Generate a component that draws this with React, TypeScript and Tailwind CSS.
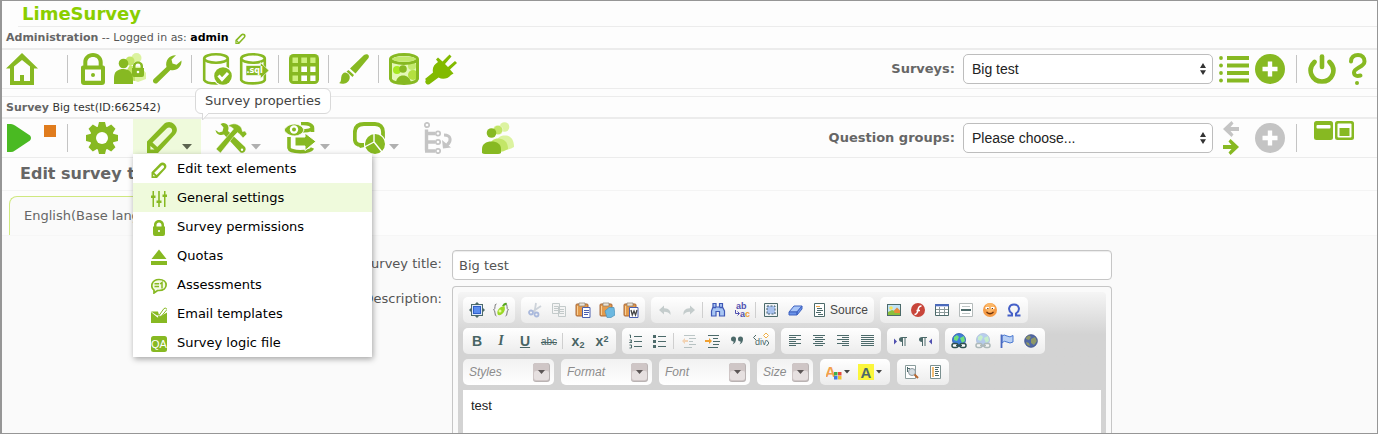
import React from "react";

type Draw = { children: React.ReactNode };

const G = "#87b922";

/* ---------- shared pieces ---------- */

function Big({ children, w = 32 }: Draw & { w?: number }) {
  return (
    <svg width={w} height="32" viewBox={`0 0 ${w} 32`} fill={G} aria-hidden="true">
      {children}
    </svg>
  );
}

function Small({ children }: Draw) {
  return (
    <svg width="16" height="16" viewBox="0 0 16 16" aria-hidden="true">
      {children}
    </svg>
  );
}

function Tool({ label, children }: Draw & { label: string }) {
  return (
    <button type="button" aria-label={label} className="block shrink-0">
      {children}
    </button>
  );
}

function Divider() {
  return <span className="mr-1 ml-[3px] h-7 w-px shrink-0 bg-[#c4c4c4]" />;
}

function Caret({ dark = false }: { dark?: boolean }) {
  return (
    <svg width="10" height="6" viewBox="0 0 10 6" className="mb-1 self-end" aria-hidden="true">
      <path d="M0 0H10L5 5.5Z" fill={dark ? "#5c6450" : "#b0b0b0"} />
    </svg>
  );
}

function Picker({ id, label, value }: { id: string; label: string; value: string }) {
  return (
    <>
      <label htmlFor={id} className="mr-2 text-[13px] font-bold text-[#666]">
        {label}
      </label>
      <div className="flex h-[30px] w-[250px] items-center rounded-[5px] border border-[#bdbdbd] bg-white">
        <select
          id={id}
          className="h-full min-w-0 flex-1 appearance-none bg-transparent pl-2 font-['Liberation_Sans',Arial,sans-serif] text-sm text-[#222] outline-none"
        >
          <option>{value}</option>
        </select>
        <svg width="6" height="12" viewBox="0 0 6 12" className="mr-[6px]" fill="#333" aria-hidden="true">
          <path d="M0 5L3 0L6 5ZM0 7.2H6L3 12Z" />
        </svg>
      </div>
    </>
  );
}

function PlusIcon({ color }: { color: string }) {
  return (
    <svg width="30" height="30" viewBox="0 0 30 30" aria-hidden="true">
      <circle cx="15" cy="15" r="15" fill={color} />
      <path d="M15 7.5V22.5M7.5 15H22.5" stroke="#fff" strokeWidth="4.4" />
    </svg>
  );
}

function PencilShape() {
  return (
    <path
      fillRule="evenodd"
      d="M1 32V20.5L17.5 3.5C20.500 .5 25 .2 28.200 3.200C31.500 6.300 31.800 10.500 29 13.500L12 32ZM6.500 21.500L11.300 26L25.200 11.800C26.600 10.300 26.300 8.500 25.200 7.300C24 6.100 22.200 6 20.700 7.400ZM4.400 25V28.600L8.500 28.400Z"
    />
  );
}

/* ---------- toolbar drawings ---------- */

const HomeIcon = () => (
  <Big>
    <path fillRule="evenodd" d="M16 0L32 15.500H28V32H4V15.500H0ZM8 13.500V28H14V22H18V28H24V13.500L16 7Z" />
  </Big>
);
const LockIcon = () => (
  <Big>
    <path
      fillRule="evenodd"
      d="M6.300 12.500V9C6.300 4 10.500 0 16 0S25.700 4 25.700 9V12.500H26C27.200 12.500 28 13.300 28 14.500V29C28 30.800 26.800 32 25 32H7C5.200 32 4 30.800 4 29V14.500C4 13.300 4.800 12.500 6 12.500ZM10.300 12.500H21.700V9.500C21.700 6.200 19.500 4 16 4S10.300 6.200 10.300 9.500ZM8 16.500V27.700H24V16.500Z"
    />
    <circle cx="16" cy="22" r="2" />
  </Big>
);
const UsersLockIcon = () => (
  <Big>
    <circle cx="22.500" cy="5" r="5" fill="#dcf3a0" />
    <path d="M13 25C14 16 20 12 27 14L32 20V26L24 29Z" fill="#dcf3a0" />
    <circle cx="16" cy="8" r="4.500" fill="#c3e668" />
    <path d="M8 25L16 12L21 14V28Z" fill="#c3e668" />
    <circle cx="9.500" cy="10.500" r="4.800" />
    <path d="M0 31V25C0 18.500 4 16 9.500 16S19 19.500 19 27V31Z" />
    <path fillRule="evenodd" d="M18 15H19V13C19 7 29 7 29 13V15H30V22Q30 24 28 24H20Q18 24 18 22ZM21.500 15H26.500V13C26.500 9.700 21.500 9.700 21.500 13Z" />
    <circle cx="24" cy="19" r="1.300" fill="#fff" />
  </Big>
);
const WrenchIcon = () => (
  <Big>
    <path d="M2.800 26L15.500 14C13.800 7.500 18.500 1.800 25 2.200L20.500 6.500L21.500 10.500L25.500 11.800L30.500 7.500C31 14 25 18.500 19.500 17L6 30.200C3.500 31.500 .5 28.500 2.800 26Z" />
  </Big>
);
const Drum = () => (
  <g fill="none" stroke={G} strokeWidth="2.600">
    <ellipse cx="15" cy="5.500" rx="11.800" ry="4.200" />
    <path d="M3.200 5.500V27C5 31.500 25 31.500 26.800 27V5.500" />
  </g>
);
const DbCheckIcon = () => (
  <Big>
    <Drum />
    <circle cx="22" cy="23" r="10" fill="#fff" />
    <circle cx="22" cy="23" r="8.800" />
    <path d="M17.500 22.500L21 26.500L27 20" fill="none" stroke="#fff" strokeWidth="3" />
  </Big>
);
const DbSqlIcon = () => (
  <Big>
    <Drum />
    <path d="M8 12.500H22.500V9.500L31 17.500L22.500 25.500V22.500H8Z" stroke="#fff" strokeWidth=".6" />
    <text x="8.500" y="19.800" fontSize="8" fontWeight="bold" fontFamily="DejaVu Sans, sans-serif" fill="#fff">
      .sql
    </text>
  </Big>
);
const GridIcon = () => (
  <Big>
    <rect x="1" y="1" width="30" height="30" rx="4.500" />
    <path d="M4.500 4.500H10V10H4.500ZM13.300 4.500H19V10H13.300ZM22.300 4.500H27.500V10H22.300ZM4.500 13.500H10V19H4.500ZM4.500 22.500H10V28H4.500Z" fill="#cdf07c" />
    <path d="M13.300 13.500H19V19H13.300ZM22.300 13.500H27.500V19H22.300ZM13.300 22.500H19V28H13.300ZM22.300 22.500H27.500V28H22.300Z" fill="#fff" />
  </Big>
);
const BrushIcon = () => (
  <Big>
    <path d="M26 2C29 0 32 2 30.500 5L17.500 20.500L12 15.500ZM10.500 17L16 22L14.500 24L8.500 18.500ZM7.500 19.500C11 20.500 12.500 23 11.500 26C10 31 4 31.500 1 30C3 29 3 27.500 3.200 24.500C3.500 21.500 5 19.500 7.500 19.500Z" />
  </Big>
);
const JarIcon = () => (
  <Big>
    <path d="M2 5H30V27C26 32 6 32 2 27Z" fill="#e4f8b8" />
    <circle cx="9" cy="17" r="4" fill="#a6e822" />
    <circle cx="24" cy="13" r="4" fill="#c3ea6e" />
    <circle cx="15" cy="16" r="3.800" />
    <circle cx="25" cy="22" r="5" fill="#b4e040" />
    <path d="M8 30C8 20 22 20 23 30Z" />
    <g fill="none" stroke={G} strokeWidth="3">
      <ellipse cx="16" cy="6" rx="13.500" ry="4.500" />
      <path d="M2.500 6V26C4 32 28 32 29.500 26V6" />
    </g>
    <ellipse cx="16" cy="6" rx="11.500" ry="2.800" fill="#c3ea6e" />
  </Big>
);
const PlugIcon = () => (
  <Big>
    <path fill="#82ba00" d="M0 26L8 19.500C7 15 9 11.500 13 9L11 6.500L13 4.500L17.500 8.500L24.500 1.500L26.500 3.500L20 11L23 14L30 8L32 10L25 16.500L28.500 20.500L26 22C22.500 26 17.500 27 13.500 24.500L4 31.500C1.500 32 -1 29 1 27Z" />
  </Big>
);
const ListIcon = () => (
  <svg width="30" height="28" viewBox="0 0 30 28" fill={G} aria-hidden="true">
    <path d="M8 1H30V5H8ZM8 8.500H30V12.500H8ZM8 16H30V20H8ZM8 23.500H30V27.500H8Z" />
    <circle cx="2" cy="3" r="1.900" />
    <circle cx="2" cy="10.500" r="1.900" />
    <circle cx="2" cy="18" r="1.900" />
    <circle cx="2" cy="25.500" r="1.900" />
  </svg>
);
const PowerIcon = () => (
  <svg width="28" height="30" viewBox="0 0 28 30" fill="none" stroke={G} strokeLinecap="round" aria-hidden="true">
    <path d="M14 2.500V13" strokeWidth="4.600" />
    <path d="M6.500 8C-1.500 16 4 27.500 14 27.500S29.500 16 21.500 8" strokeWidth="4.600" />
  </svg>
);
const HelpIcon = () => (
  <svg width="18" height="32" viewBox="0 0 18 32" fill="none" stroke={G} aria-hidden="true">
    <path d="M2 8.500C2 4 5 2 9 2S15.500 4.500 15.500 8.500C15.500 14 5 15 5 19.500C5 22.500 7.500 23.500 11.500 22.500" strokeWidth="4" strokeLinecap="round" />
    <circle cx="8" cy="30" r="2" fill={G} stroke="none" />
  </svg>
);
const PlayIcon = () => (
  <svg width="25" height="28" viewBox="0 0 25 28" aria-hidden="true">
    <path d="M0 0H4Q6 0 8 1.500L23 11.500Q25 14 23 16.500L8 26.500Q6 28 4 28H0Z" fill="#4aba22" />
  </svg>
);
const GearIcon = () => (
  <Big>
    <g>
      {[0, 45, 90, 135].map((a) => (
        <path key={a} d="M13 0H19L20.500 6V26L19 32H13L11.500 26V6Z" transform={`rotate(${a} 16 16)`} />
      ))}
      <circle cx="16" cy="16" r="12" />
      <circle cx="16" cy="16" r="6" fill="#fff" />
    </g>
  </Big>
);
const ToolsIcon = () => (
  <Big>
    <path d="M8 1C13 1 14.500 5 13 9L30 25C32 28 29 32 25.500 30.500L9 12.500C5 14 1 12 .5 8L4 10.500L7.500 9.500L8.500 5.500L5.500 2Z" />
    <circle cx="27" cy="27.800" r="1.200" fill="#fff" />
    <path d="M13 4C18 0 24 2 26.500 6L27.500 9.500L30 9L32 12L28 16L25 12.500L22.500 10.500L19.500 13.500L5.500 31L1 27L16 10L18.500 7C17 5 15 4.500 13 4Z" stroke="#fff" strokeWidth=".5" />
  </Big>
);
const ExportIcon = () => (
  <Big>
    <path d="M17 1.500C24 1 28.500 3 28.500 6V10M5 15V26C6 31 26 31 28.500 26M18 8.500C23 9 27 8 28 6" fill="none" stroke={G} strokeWidth="3.600" />
    <path d="M0 8C4 0 17 0 20 8C17 16 4 16 0 8Z" stroke="#fff" />
    <circle cx="10" cy="7.500" r="4.200" fill="#fff" />
    <circle cx="10" cy="7.500" r="2" />
    <path d="M11 15H21V11L32 19.500L21 28.500V24H11Z" stroke="#fff" />
  </Big>
);
const ResponsesIcon = () => (
  <Big>
    <path d="M8 23C4 23 1.800 21 1.800 17V11C1.800 5 5 2 11 2H22C27 2 30 5 30 10V17" fill="none" stroke={G} strokeWidth="3.800" />
    <path d="M4 21H11L11.500 25L7 26Z" />
    <circle cx="22" cy="22" r="11" fill="#fff" />
    <circle cx="22" cy="22" r="10" />
    <path d="M21 20V11M21 20L11.500 25M21 20L29 30" stroke="#fff" strokeWidth="1.400" />
  </Big>
);
const OrganizeIcon = () => (
  <Big>
    <g fill="none" stroke="#c4c4c4">
      <circle cx="5" cy="3" r="2.200" strokeWidth="1.700" />
      <path d="M4.500 7.500V28.500M4 11.500H13M4 20H13M3 29H13" strokeWidth="3.400" />
      <g strokeWidth="1.700">
        <circle cx="16" cy="11.500" r="2.200" />
        <circle cx="16" cy="20" r="2.200" />
        <circle cx="16" cy="29" r="2.200" />
      </g>
      <path d="M22 13C29 13 30 19 25 23" strokeWidth="3" />
    </g>
    <path d="M20 18L21 26.500L29 25.500Z" fill="#c4c4c4" />
  </Big>
);
const UsersIcon = () => (
  <Big>
    <circle cx="22.500" cy="5" r="4.800" fill="#dcf3a0" />
    <path d="M14 21C15 15 19 13.500 23 13.500C29 13.500 32 18 32 25C29 27 25 28 22 28Z" fill="#dcf3a0" />
    <circle cx="16" cy="8" r="4.800" fill="#c3e668" stroke="#fff" strokeWidth=".5" />
    <path d="M7 25C8 19 12 16.500 16 16.500C22 16.500 26 20 26 27C23 29 20 30 17 30Z" fill="#c3e668" />
    <circle cx="9.500" cy="11" r="4.800" />
    <path d="M0 31V27C0 22 4 19.500 9.500 19.500S19 22 19 27V31Q18 32 16 32H3Q1 32 0 31Z" />
  </Big>
);

/* ---------- survey properties menu ---------- */

const menu: { label: string; icon: React.ReactNode }[] = [
  {
    label: "Edit text elements",
    icon: (
      <g transform="scale(.5)">
        <PencilShape />
      </g>
    ),
  },
  {
    label: "General settings",
    icon: <path d="M1.500 0H3V4.500H4.500V7H3V16H1.500V7H0V4.500H1.500ZM7.200 0H8.800V9.500H10.500V12H8.800V16H7.200V12H5.500V9.500H7.200ZM13 0H14.500V3.500H16V6H14.500V16H13V6H11.500V3.500H13Z" />,
  },
  {
    label: "Survey permissions",
    icon: (
      <path
        fillRule="evenodd"
        d="M3 6.500V5C3 -1.600 13 -1.600 13 5V6.500H14V14Q14 16 12 16H4Q2 16 2 14V6.500ZM5.500 6.500H10.500V5C10.500 1.600 5.500 1.600 5.500 5ZM7.200 10V12H8.800V10Z"
      />
    ),
  },
  { label: "Quotas", icon: <path d="M8 .5L15.500 10H.5ZM0 12H16V16H0Z" /> },
  {
    label: "Assessments",
    icon: (
      <>
        <path d="M3 12.200C-1 9 .5 1.500 8 1.500C17.500 1.500 17.500 12.500 8 12.500H6.500L3 15Z" fill="#f3fae4" stroke={G} strokeWidth="1.700" />
        <path d="M3.500 5.700H8M3.500 8.400H8M9 6L11 4.500V10.500" fill="none" stroke={G} strokeWidth="1.500" />
      </>
    ),
  },
  {
    label: "Email templates",
    icon: (
      <>
        <path d="M0 5L6.500 10.500L9 9.500L16 5.500V16H0Z" />
        <path d="M0 4.500H7L8 8L6 8.500Z" />
        <path d="M8 8.500L13 1.500Q15 0 16 2.500L10.500 9L7.500 10Z" fill="#fff" stroke={G} />
      </>
    ),
  },
  {
    label: "Survey logic file",
    icon: (
      <>
        <rect width="16" height="16" rx="2.500" />
        <text x="8" y="12" fontSize="11" textAnchor="middle" fontFamily="Liberation Sans, Arial, sans-serif" fill="#fff">
          QA
        </text>
      </>
    ),
  },
];

function PropertiesMenu() {
  return (
    <ul className="absolute top-full left-0 z-20 w-[239px] bg-white shadow-[1px_2px_6px_rgba(0,0,0,0.35)]">
      {menu.map((m) => (
        <li key={m.label}>
          <a
            href="#"
            className={`flex h-[29px] items-center text-[13px] text-black ${m.label === "General settings" ? "bg-[#effadc]" : ""}`}
          >
            <svg width="16" height="16" viewBox="0 0 16 16" fill={G} className="mt-0.5 mr-2.5 ml-[18px]" aria-hidden="true">
              {m.icon}
            </svg>
            {m.label}
          </a>
        </li>
      ))}
    </ul>
  );
}

/* ---------- editor ---------- */

const T = "#4c6a6a";

const lines = (d: string) => <path d={d} stroke={T} strokeWidth="1" fill="none" />;

const Clip = ({ children }: Draw) => (
  <>
    <rect x="1" y="2" width="12" height="12" rx="1" fill="#e39a4b" stroke="#a8683a" />
    <path d="M4 1H10V4H4Z" fill="#ece4d6" stroke="#8b7d6b" strokeWidth=".7" />
    <path d="M2.500 4V13" stroke="#f8cf95" />
    {children}
  </>
);

const Globe = ({ faded = false }: { faded?: boolean }) => (
  <g opacity={faded ? 0.35 : 1}>
    <circle cx="8" cy="7" r="6.500" fill="#3f7fd8" stroke="#2855a8" strokeWidth=".8" />
    <path d="M3 4L6 2L8 4L6 8L3 7ZM9 5L13 3L14 8L11 10Z" fill="#6fe07c" />
    <rect x="1" y="10.500" width="6" height="4" rx="2" fill="#fff" stroke="#2f5050" strokeWidth="1.500" />
    <rect x="9" y="10.500" width="6" height="4" rx="2" fill="#fff" stroke="#2f5050" strokeWidth="1.500" />
    <path d="M5 12.500H11" stroke="#2f5050" strokeWidth="1.500" />
  </g>
);

function Ed({ label, children }: Draw & { label: string }) {
  return (
    <button type="button" aria-label={label} className="flex h-6 w-6 items-center justify-center">
      {children}
    </button>
  );
}

function EdIcon({ label, children }: Draw & { label: string }) {
  return (
    <Ed label={label}>
      <Small>{children}</Small>
    </Ed>
  );
}

function Group({ children }: Draw) {
  return (
    <div className="flex h-[26px] items-center rounded-[5px] bg-linear-to-b from-white to-[#ececec] px-0.5">{children}</div>
  );
}

function Bar() {
  return <span className="mr-[3px] ml-px h-4 w-px bg-[#cfcfcf]" />;
}

function Combo({ name, width }: { name: string; width: string }) {
  return (
    <div className={`flex h-[26px] items-center rounded-[5px] bg-linear-to-b from-[#f2f2f2] to-white pr-1 ${width}`}>
      <select
        aria-label={name}
        className="min-w-0 flex-1 appearance-none bg-transparent pl-1.5 text-xs text-[#8c8c8c] italic outline-none"
      >
        <option>{name}</option>
      </select>
      <svg width="17" height="19" viewBox="0 0 17 19" aria-hidden="true">
        <rect width="17" height="19" rx="3" fill="#b9b3b3" />
        <rect x="0" y="0" width="16" height="18" rx="3" fill="#cfc6c6" />
        <rect x="1" y="8" width="15" height="9" rx="2" fill="#e6e0e0" />
        <path d="M5 7H12L8.500 11Z" fill="#5c5656" />
      </svg>
    </div>
  );
}

function DropArrow() {
  return (
    <svg width="6" height="4" viewBox="0 0 6 4" className="mr-1.5" aria-hidden="true">
      <path d="M0 0H6L3 3.500Z" fill="#444" />
    </svg>
  );
}

function Toolbar() {
  return (
    <div className="flex flex-col gap-[5px] font-['Liberation_Sans',Arial,sans-serif]">
      <div className="flex flex-wrap gap-1.5">
        <Group>
          <EdIcon label="Maximize">
            <rect x="2.500" y="2.500" width="11" height="11" fill="#dfe9fa" stroke={T} />
            <rect x="4.500" y="4.500" width="7" height="7" fill="#5b8def" stroke="#2f5fc8" />
            <path d="M8 0L10 2H6ZM8 16L10 14H6ZM0 8L2 6V10ZM16 8L14 6V10Z" fill={T} />
          </EdIcon>
          <EdIcon label="Placeholder fields">
            <path d="M3.500 2Q1.800 2 2 4.500T.5 8Q2 8 2 11T3.500 14M12.500 2Q14.200 2 14 4.500T15.500 8Q14 8 14 11T12.500 14" fill="none" stroke="#777" />
            <path d="M11 3C14 9 9 14 5 13C3 9 6 5 11 4Z" fill="#9bd827" />
            <circle cx="7" cy="9" r="1.500" fill="#e6fb9a" />
            <path d="M9 4Q11 0 14 1Q13 4 10 4Z" fill="#53a51b" />
          </EdIcon>
        </Group>
        <Group>
          <EdIcon label="Cut">
            <g fill="none" stroke="#aab9dc" strokeWidth="1.800">
              <path d="M9 1L7.500 10M14 4L5 10" stroke="#cdd3da" />
              <circle cx="4" cy="10.500" r="2" />
              <circle cx="9.500" cy="12.500" r="2" />
            </g>
          </EdIcon>
          <EdIcon label="Copy">
            <path d="M1.500 1.500H8.500V11.500H1.500ZM7.500 4.500H14.500V14.500H7.500Z" fill="#f4f4f4" stroke="#c3caca" />
            <path d="M3 4.500H7M3 6.500H7M3 8.500H7M9 7.500H13M9 9.500H13M9 11.500H13" stroke="#c3caca" />
          </EdIcon>
          <EdIcon label="Paste">
            <Clip>
              <path d="M7.500 5.500H15V15.500H7.500Z" fill="#fff" stroke="#4a5fae" />
              <path d="M9 8.500H14M9 10.500H14M9 12.500H13" stroke="#4a5fae" />
            </Clip>
          </EdIcon>
          <EdIcon label="Paste as plain text">
            <Clip>
              <path d="M6 9L10 5.500H15L16 13L12 15.500H8Z" fill="#6cb8e0" stroke="#4a90b8" strokeWidth=".7" />
            </Clip>
          </EdIcon>
          <EdIcon label="Paste from Word">
            <Clip>
              <path d="M6.500 5.500H15V15.500H6.500Z" fill="#fff" stroke="#4a5fae" />
              <path d="M8 8L9.300 13L11 9L12.500 13L14 8" fill="none" stroke="#444" strokeWidth="1.300" />
            </Clip>
          </EdIcon>
        </Group>
        <Group>
          <EdIcon label="Undo">
            <path d="M2 8L7 3.500V6.200C12 6 14 9 13.500 13C12 10.500 10.500 9.800 7 9.800V12.500Z" fill="#c4cccc" />
          </EdIcon>
          <EdIcon label="Redo">
            <path d="M14 8L9 3.500V6.200C4 6 2 9 2.500 13C4 10.500 5.500 9.800 9 9.800V12.500Z" fill="#c4cccc" />
          </EdIcon>
          <Bar />
          <EdIcon label="Find">
            <path d="M3 1.500H6V5H9.500V1.500H12.500V5L14.500 9V14H9.500V9.500H6V14H1.500V9L3 5Z" fill="#a8c6f4" stroke="#3f58b5" strokeWidth="1.200" />
            <path d="M3 5.500H6M9.500 5.500H12.500" stroke="#3f58b5" strokeWidth="1.500" />
          </EdIcon>
          <EdIcon label="Replace">
            <g fontSize="9" fontFamily="Liberation Sans, Arial, sans-serif" fontWeight="bold">
              <text x="2" y="7" fill="#5050b0">ab</text>
              <text x="6" y="15" fill="#5050b0">a</text>
              <text x="11" y="15" fill="#f0a030">c</text>
            </g>
            <path d="M1.500 8V11.500H5M3.500 9.500L5.500 11.500L3.500 13.500" fill="none" stroke="#5050b0" />
          </EdIcon>
          <Bar />
          <EdIcon label="Select all">
            <path d="M1.500 1.500H14.500V14.500H1.500Z" fill="#eef2f6" stroke={T} />
            <rect x="4" y="4" width="8" height="8" fill="#a9c2ef" stroke="#47606a" strokeDasharray="2 1.500" />
          </EdIcon>
          <EdIcon label="Remove format">
            <path d="M2 10L7 4H15L10 10Z" fill="#a9c6f8" stroke="#3f62c0" />
            <path d="M2 10H10V13H2ZM10 10L15 4V7L10 13Z" fill="#6b94ea" stroke="#3f62c0" />
          </EdIcon>
          <button type="button" className="flex h-6 items-center gap-[3px] px-1 text-xs text-[#484848]">
            <Small>
              <path d="M3.500 1.500H13.500V14.500H3.500Z" fill="#fff" stroke={T} />
              <path d="M5 4.500H9" stroke="#f0a848" />
              {lines("M6 6.500H11M6 8.500H12M5 10.500H10M7 12.500H12")}
            </Small>
            Source
          </button>
        </Group>
        <Group>
          <EdIcon label="Image">
            <rect x="1.500" y="2.500" width="13" height="11" fill="#bfe2f5" stroke={T} />
            <path d="M2 13V10L6 8L14 11V13Z" fill="#8abf3c" />
            <circle cx="5" cy="6" r="1.800" fill="#f5e458" />
            <path d="M8 8.500L11 5.500L14 8.500V11H8.500Z" fill="#e88a38" />
          </EdIcon>
          <EdIcon label="Flash">
            <circle cx="8" cy="8" r="7" fill="#c8453a" />
            <path d="M11.500 4Q8.500 4 8 8T4.500 12.500M6.500 8.500H10" fill="none" stroke="#fff" strokeWidth="1.600" />
          </EdIcon>
          <EdIcon label="Table">
            <path d="M1.500 2.500H14.500V13.500H1.500Z" fill="#fff" stroke={T} />
            <path d="M1 3.200H15" stroke="#4a6ac0" strokeWidth="2.200" />
            <path d="M2 7.500H14M2 10.500H14M5.500 5V13M10.500 5V13" stroke="#8b9a9a" />
          </EdIcon>
          <EdIcon label="Horizontal line">
            <path d="M1.500 1.500H14.500V14.500H1.500Z" fill="#fff" stroke="#b4baba" />
            <path d="M4 4.500H12M4 11.500H12" stroke="#c0c6c6" />
            <path d="M3 8H13" stroke={T} strokeWidth="2" />
          </EdIcon>
          <EdIcon label="Smiley">
            <circle cx="8" cy="8" r="7" fill="#f59b45" />
            <circle cx="8" cy="5.500" r="4.500" fill="#fbb768" />
            <path d="M3.500 6H7M9 6H12.500" stroke="#fff" strokeWidth="2" />
            <path d="M5.200 6.500H6.500M9.700 6.500H11M4.500 10Q8 13.500 11.500 10" fill="none" stroke="#6b3410" strokeWidth="1.200" />
          </EdIcon>
          <EdIcon label="Special character">
            <path d="M1.500 13.500H6V11.500C1 8 3 2.500 8 2.500S15 8 10 11.500V13.500H14.500" fill="none" stroke="#4560c8" strokeWidth="2" />
          </EdIcon>
        </Group>
      </div>

      <div className="flex flex-wrap gap-1.5">
        <Group>
          <Ed label="Bold">
            <span className="text-sm font-bold text-[#486464]">B</span>
          </Ed>
          <Ed label="Italic">
            <span className="font-['Liberation_Serif',serif] text-sm font-bold text-[#486464] italic">I</span>
          </Ed>
          <Ed label="Underline">
            <span className="text-sm font-bold text-[#486464] underline">U</span>
          </Ed>
          <Ed label="Strikethrough">
            <span className="text-[10px] text-[#486464] line-through">abc</span>
          </Ed>
          <Bar />
          <Ed label="Subscript">
            <span className="text-sm leading-4 font-bold text-[#486464]">
              x<sub className="text-[9px]">2</sub>
            </span>
          </Ed>
          <Ed label="Superscript">
            <span className="text-sm leading-4 font-bold text-[#486464]">
              x<sup className="text-[9px]">2</sup>
            </span>
          </Ed>
        </Group>
        <Group>
          <EdIcon label="Numbered list">
            {lines("M6 3.500H14M6 8.500H14M6 13.500H14M1.500 2H2.500V5M1.500 7H3.500V8.500L1.500 9.500H4M1.500 12H3.500V15H1.500")}
          </EdIcon>
          <EdIcon label="Bulleted list">
            {lines("M6 3.500H14M6 8.500H14M6 13.500H14")}
            <path d="M1 2H4V5H1ZM1 7H4V10H1ZM1 12H4V15H1Z" fill={T} />
          </EdIcon>
          <Bar />
          <EdIcon label="Decrease indent">
            <g opacity=".35">
              {lines("M3 2.500H14M8 5.500H15M8 8.500H12M8 11.500H15M3 14.500H11")}
              <path d="M1 8L4 5V7H7V9H4V11Z" fill="#f0953c" />
            </g>
          </EdIcon>
          <EdIcon label="Increase indent">
            {lines("M3 2.500H14M8 5.500H13M8 8.500H15M8 11.500H14M3 14.500H13")}
            <path d="M7 8L4 5V7H0V9H4V11Z" fill="#f0a030" />
          </EdIcon>
          <EdIcon label="Block quote">
            <path d="M2 6A2.500 2.500 0 1 1 7 6Q7 10 3.500 11.500Q5 9.500 4.500 8.500Q2 8.500 2 6ZM9 6A2.500 2.500 0 1 1 14 6Q14 10 10.500 11.500Q12 9.500 11.500 8.500Q9 8.500 9 6Z" fill={T} />
          </EdIcon>
          <EdIcon label="Create div container">
            <text x="2" y="12" fontSize="9" fontFamily="Liberation Sans, Arial, sans-serif" fill={T}>
              div
            </text>
            <path d="M3 2L.5 4.500L3 7M13.500 7L16 10L13.500 13" fill="none" stroke={T} />
            <path d="M13 0L15.500 2.500L13 5L10.500 2.500Z" fill="#fff" stroke="#f0b048" />
          </EdIcon>
        </Group>
        <Group>
          <EdIcon label="Align left">{lines("M2 2.500H14M2 4.500H9M2 6.500H14M2 8.500H9M2 10.500H14M2 12.500H9")}</EdIcon>
          <EdIcon label="Center">{lines("M2 2.500H14M4 4.500H12M2 6.500H14M4 8.500H12M2 10.500H14M4 12.500H12")}</EdIcon>
          <EdIcon label="Align right">{lines("M2 2.500H14M7 4.500H14M2 6.500H14M7 8.500H14M2 10.500H14M7 12.500H14")}</EdIcon>
          <EdIcon label="Justify">{lines("M2 2.500H15M2 4.500H15M2 6.500H15M2 8.500H15M2 10.500H15M2 12.500H15")}</EdIcon>
        </Group>
        <Group>
          <EdIcon label="Text direction left to right">
            <path d="M1 5.500L4 8.500L1 11.500Z" fill="#5050b0" />
            <path d="M14 4H9C5 4 5 9 9 9V13H10V5H11.500V13H12.500V5H14Z" fill={T} />
          </EdIcon>
          <EdIcon label="Text direction right to left">
            <path d="M15 5.500L12 8.500L15 11.500Z" fill="#5050b0" />
            <path d="M10 4H5C1 4 1 9 5 9V13H6V5H7.500V13H8.500V5H10Z" fill={T} />
          </EdIcon>
        </Group>
        <Group>
          <EdIcon label="Link">
            <Globe />
          </EdIcon>
          <EdIcon label="Unlink">
            <Globe faded />
          </EdIcon>
          <EdIcon label="Anchor">
            <path d="M3 3Q5 1 8 3T14 2.500V9Q11 11 8 9T3 10Z" fill="#b9d0f4" stroke="#4a78d0" />
            <path d="M2.500 1.500V15" stroke="#4a68c0" strokeWidth="1.800" />
          </EdIcon>
          <EdIcon label="Page frame">
            <circle cx="8" cy="8" r="6.500" fill="#5068a4" />
            <path d="M3 4L6 2L8 4L6 7L3 6ZM8 6L12 4L14 8L11 12L8 10ZM3 9L6 10L7 13L4 12Z" fill="#8e9866" />
            <circle cx="8" cy="8" r="6.300" fill="none" stroke="#44548a" strokeWidth=".7" />
          </EdIcon>
        </Group>
      </div>

      <div className="flex flex-wrap gap-[7px]">
        <Combo name="Styles" width="w-[91px]" />
        <Combo name="Format" width="w-[91px]" />
        <Combo name="Font" width="w-[91px]" />
        <Combo name="Size" width="w-14" />
        <Group>
          <button type="button" aria-label="Text colour" className="flex h-6 items-center gap-0.5 pl-1">
            <Small>
              <text x="-1" y="13" fontSize="15" fontWeight="bold" fontFamily="Liberation Sans, Arial, sans-serif" fill="#f2a04c">
                A
              </text>
              <path d="M8 8H11.500V11.500H8Z" fill="#3fae49" />
              <path d="M12 8H15.500V11.500H12Z" fill="#e64a3c" />
              <path d="M8 12H11.500V15.500H8Z" fill="#3f78e0" />
              <path d="M12 12H15.500V15.500H12Z" fill="#f0c030" />
            </Small>
            <DropArrow />
          </button>
          <button type="button" aria-label="Background colour" className="flex h-6 items-center gap-0.5 pl-0.5">
            <Small>
              <rect width="16" height="16" fill="#fbf63c" />
              <text x="8" y="13.500" textAnchor="middle" fontSize="15" fontWeight="bold" fontFamily="Liberation Sans, Arial, sans-serif" fill={T}>
                A
              </text>
            </Small>
            <DropArrow />
          </button>
        </Group>
        <Group>
          <EdIcon label="Preview">
            <path d="M2.500 1.500H12.500V14.500H2.500Z" fill="#fff" stroke="#8a9c9c" />
            <path d="M4 4.500H7M4.500 3V8" stroke={T} />
            <circle cx="9" cy="8" r="3.500" fill="#d5dde2" stroke="#8f9a9f" />
            <path d="M11.500 10.500L15 14" stroke="#b8662f" strokeWidth="2" />
          </EdIcon>
          <EdIcon label="Templates">
            <path d="M3.500 1.500H13.500V14.500H3.500Z" fill="#fff" stroke="#7b9090" />
            <path d="M6 3V13" stroke="#f0a848" strokeWidth="1.500" />
            {lines("M8 3.500H12M8 5.500H11M8 7.500H12M8 9.500H11M8 11.500H12")}
          </EdIcon>
        </Group>
      </div>
    </div>
  );
}

/* ---------- page ---------- */

export default function App() {
  return (
    <div className="flex h-screen flex-col overflow-hidden border border-l-2 border-[#969696] bg-[#fdfdfd] font-['DejaVu_Sans',Verdana,sans-serif] text-[13px] text-[#555]">
      <header className="shrink-0">
        <h1 className="ml-4 flex h-[26px] items-center border-b border-[#ececec] pl-1 text-lg font-bold text-[#8ace00]">LimeSurvey</h1>
        <p className="flex h-[23px] items-center border-b-2 border-[#ececec] pt-0.5 pl-1 text-[11px] whitespace-pre">
          <strong className="text-[#666]">Administration</strong>
          {" -- Logged in as: "}
          <strong className="text-black">admin</strong>
          <a href="#" aria-label="Edit account" className="ml-1.5">
            <svg width="11" height="11" viewBox="0 0 32 32" fill={G} aria-hidden="true">
              <PencilShape />
            </svg>
          </a>
        </p>
        <nav className="flex h-[39px] items-center justify-between border-b border-[#ececec] pr-px pl-1">
          <div className="flex items-center gap-[5px]">
            <Tool label="Home"><HomeIcon /></Tool>
            <span className="w-4" />
            <Divider />
            <Tool label="Manage administrators"><LockIcon /></Tool>
            <Tool label="Manage user groups"><UsersLockIcon /></Tool>
            <Tool label="Global settings"><WrenchIcon /></Tool>
            <Divider />
            <Tool label="Check data integrity"><DbCheckIcon /></Tool>
            <Tool label="Backup database"><DbSqlIcon /></Tool>
            <Divider />
            <Tool label="Label sets"><GridIcon /></Tool>
            <Divider />
            <Tool label="Template editor"><BrushIcon /></Tool>
            <Divider />
            <Tool label="Participants database"><JarIcon /></Tool>
            <Tool label="Plugin manager"><PlugIcon /></Tool>
          </div>
          <div className="flex items-center">
            <Picker id="surveys" label="Surveys:" value="Big test" />
            <div className="ml-1.5 flex w-[157px] items-center">
              <Tool label="List surveys"><ListIcon /></Tool>
              <span className="w-1.5" />
              <Tool label="Create survey"><PlusIcon color={G} /></Tool>
              <span className="mx-[11px] h-7 w-px bg-[#c4c4c4]" />
              <Tool label="Log out"><PowerIcon /></Tool>
              <span className="w-[13px]" />
              <Tool label="Help"><HelpIcon /></Tool>
            </div>
          </div>
        </nav>
      </header>

      <section className="mt-[7px] shrink-0 border-t border-[#ececec]">
        <h2 className="flex h-[22px] items-center border-b-2 border-[#ececec] pt-0.5 pl-1 text-[11px] whitespace-pre text-[#333]">
          <strong className="text-[#666]">Survey</strong> Big test(ID:662542)
        </h2>
        <nav className="flex h-[39px] items-center justify-between border-b border-[#ececec] pr-px pl-[5px]">
          <div className="flex h-full">
            <div className="flex items-center">
              <Tool label="Activate survey"><PlayIcon /></Tool>
              <button type="button" aria-label="Stop survey" className="mb-[15px] ml-3 h-3 w-3 bg-[#e07c1e]" />
              <span className="mr-[18px] ml-[11px] h-7 w-px bg-[#c4c4c4]" />
              <Tool label="Survey settings"><GearIcon /></Tool>
            </div>
            <div className="relative ml-[15px] h-[35px] w-[68px] bg-[#effadc]">
              <button type="button" aria-label="Survey properties" className="flex h-full w-full items-center gap-1 pl-[13px]">
                <Big><PencilShape /></Big>
                <Caret dark />
              </button>
              <div role="tooltip" className="absolute -top-[31px] left-[62px] z-10 rounded-md border border-[#d9d9d9] bg-white px-[9px] py-px leading-[22px] whitespace-nowrap text-[#444]">
                Survey properties
                <svg width="8" height="8" viewBox="0 0 8 8" className="absolute top-full left-1.5" aria-hidden="true">
                  <path d="M0 -1V7L7 0V-1Z" fill="#fff" />
                  <path d="M.5 0V7L7 0" fill="none" stroke="#d9d9d9" />
                </svg>
              </div>
              <PropertiesMenu />
            </div>
            <div className="ml-[14px] flex items-center gap-[23px]">
              <button type="button" aria-label="Tools" className="flex gap-1"><ToolsIcon /><Caret /></button>
              <button type="button" aria-label="Display and export" className="flex gap-1"><ExportIcon /><Caret /></button>
              <button type="button" aria-label="Responses" className="flex gap-1"><ResponsesIcon /><Caret /></button>
              <div className="flex gap-7">
                <Tool label="Organize question groups"><OrganizeIcon /></Tool>
                <Tool label="Participants"><UsersIcon /></Tool>
              </div>
            </div>
          </div>
          <div className="flex items-center">
            <Picker id="groups" label="Question groups:" value="Please choose..." />
            <div className="ml-1.5 flex w-[157px] items-center">
              <div className="ml-1 flex w-8 flex-col gap-0.5">
                <Tool label="Previous question group">
                  <svg width="16" height="16" viewBox="0 0 16 16" aria-hidden="true">
                    <path d="M16 6H7.500L10.500 2.500L8.500 0L0 8L8.500 16L10.500 13.500L7.500 10H16Z" fill="#c4c4c4" />
                  </svg>
                </Tool>
                <Tool label="Next question group">
                  <svg width="16" height="16" viewBox="0 0 16 16" aria-hidden="true">
                    <path d="M0 6H8.500L5.500 2.500L7.500 0L16 8L7.500 16L5.500 13.500L8.500 10H0Z" fill={G} />
                  </svg>
                </Tool>
              </div>
              <Tool label="Add question group"><PlusIcon color="#c4c4c4" /></Tool>
              <span className="mr-[17px] ml-[11px] h-7 w-px bg-[#c4c4c4]" />
              <div className="mb-[15px] flex gap-0.5">
                <Tool label="Minimize">
                  <svg width="19" height="19" viewBox="0 0 19 19" aria-hidden="true">
                    <rect width="19" height="19" rx="2.500" fill={G} />
                    <rect x="2.500" y="4" width="14" height="3.500" rx="1" fill="#fff" />
                  </svg>
                </Tool>
                <Tool label="Maximize">
                  <svg width="19" height="19" viewBox="0 0 19 19" aria-hidden="true">
                    <rect width="19" height="19" rx="2.500" fill={G} />
                    <rect x="2.500" y="2.500" width="14" height="14" rx="1" fill="#fff" />
                    <rect x="4.500" y="7" width="10" height="8" fill={G} />
                  </svg>
                </Tool>
              </div>
            </div>
          </div>
        </nav>
      </section>

      <h2 className="flex h-[33px] shrink-0 items-center border-b border-[#f4f4f4] pl-[18px] text-base font-bold text-[#666]">
        Edit survey text elements
      </h2>
      <div className="flex h-[45px] shrink-0 items-end border-b border-[#f6f6f6] pl-[7px]">
        <a href="#" className="flex h-[39px] items-center rounded-t-lg border border-r-0 border-b-0 border-[#cfe87f] bg-[#fafafa] px-3.5 text-[#666]">
          English(Base language)
        </a>
      </div>

      <main className="flex min-h-0 flex-1 flex-col gap-1.5 bg-[#fafafa] pt-3.5">
        <div className="flex shrink-0">
          <label htmlFor="title" className="mr-2.5 w-[32%] pt-1.5 text-right leading-4">Survey title:</label>
          <input
            id="title"
            defaultValue="Big test"
            className="h-[30px] w-[48%] rounded border border-[#c6c6c6] bg-white px-1.5 text-[#555] shadow-[inset_0_1px_1px_rgba(0,0,0,0.08)] outline-none"
          />
        </div>
        <div className="flex min-h-0 flex-1">
          <label htmlFor="description" className="mr-2.5 w-[32%] pt-[5px] text-right leading-4">Description:</label>
          <div className="flex w-[48%] flex-col rounded-t border border-b-0 border-[#c6c6c6] p-[5px] pb-0">
            <div className="flex min-h-0 flex-1 flex-col gap-[5px] rounded-t bg-[#d3d3d3] bg-linear-to-b from-[#f5f5f5] to-[#d3d3d3] to-30% p-[5px] pb-0">
              <Toolbar />
              <textarea
                id="description"
                defaultValue="test"
                className="block min-h-0 w-full flex-1 resize-none bg-white px-2 pt-2 font-['Liberation_Sans',Arial,sans-serif] text-[13px] leading-4 text-[#222] outline-none"
              />
            </div>
          </div>
        </div>
      </main>
    </div>
  );
}
